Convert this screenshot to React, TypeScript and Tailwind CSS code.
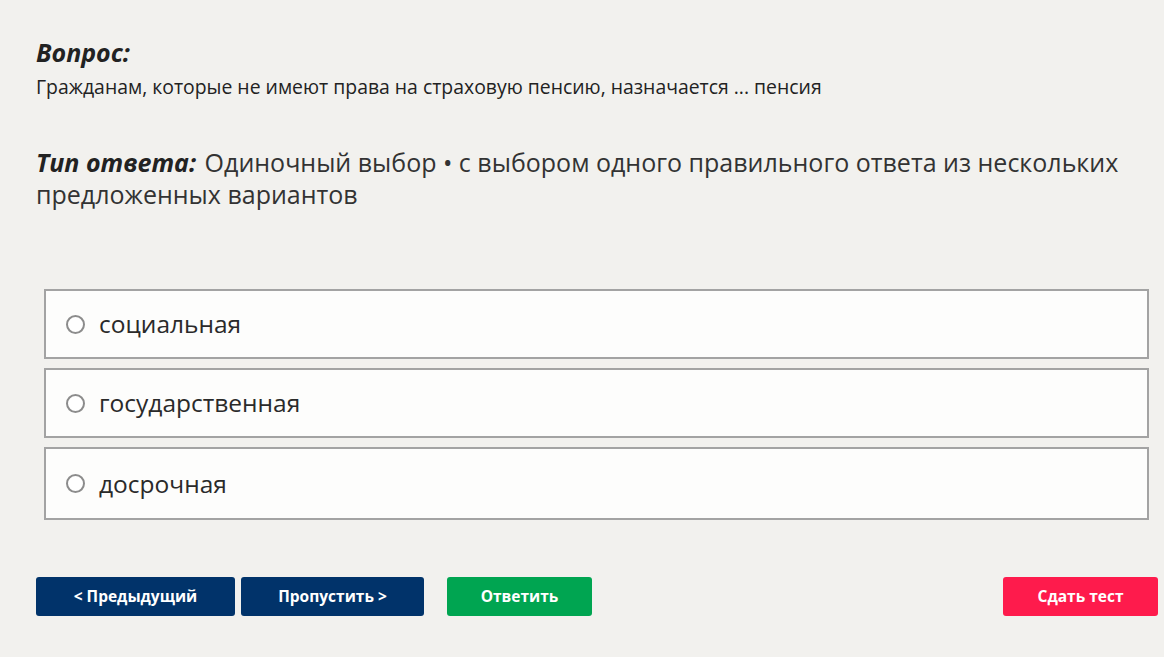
import React from 'react';

const OPTIONS = ['социальная', 'государственная', 'досрочная'];

const App: React.FC = () => {
  return (
    <div
      className="min-h-[657px] w-full bg-[#f2f1ee] text-[#222222]"
      style={{ fontFamily: '"Open Sans", "Noto Sans", sans-serif' }}
    >
      <div className="pl-9 pr-[6px] pt-[36px]">
        <h2 className="text-[25px] font-bold italic leading-[32px] text-[#222222]">Вопрос:</h2>
        <p className="mt-[6px] text-[19.4px] leading-[26px] text-[#222222]">
          Гражданам, которые не имеют права на страховую пенсию, назначается ... пенсия
        </p>

        <p className="mt-[46px] text-[25px] leading-[32px] text-[#333333]">
          <span className="mr-[2px] font-bold italic text-[#222222]">Тип ответа:</span> Одиночный выбор • с выбором
          одного правильного ответа из нескольких предложенных вариантов
        </p>

        <div className="mt-[79px] ml-2 mr-[9px] flex flex-col gap-[9px]">
          {OPTIONS.map((opt, i) => (
            <label
              key={opt}
              className={`flex items-center border-2 border-[#a3a3a3] bg-[#fdfdfc] pl-[20px] ${
                i === 2 ? 'h-[73px]' : 'h-[70px]'
              }`}
            >
              <span className="h-[19px] w-[19px] rounded-full border-2 border-[#8c8c8c] bg-white" />
              <span className="ml-[14px] text-[24.5px] leading-[32px] text-[#2a2a2a]">{opt}</span>
            </label>
          ))}
        </div>

        <div className="mt-[57px] flex items-center">
          <button className="h-[39px] w-[199px] rounded-[3px] bg-[#01336a] text-[15.5px] font-bold text-white">
            &lt; Предыдущий
          </button>
          <button className="ml-[6px] h-[39px] w-[183px] rounded-[3px] bg-[#01336a] text-[15.5px] font-bold text-white">
            Пропустить &gt;
          </button>
          <button className="ml-[23px] h-[39px] w-[145px] rounded-[3px] bg-[#00a551] text-[15.5px] font-bold text-white">
            Ответить
          </button>
          <button className="ml-auto h-[39px] w-[155px] rounded-[3px] bg-[#fe1b4c] text-[15.5px] font-bold text-white">
            Сдать тест
          </button>
        </div>
      </div>
    </div>
  );
};

export default App;
